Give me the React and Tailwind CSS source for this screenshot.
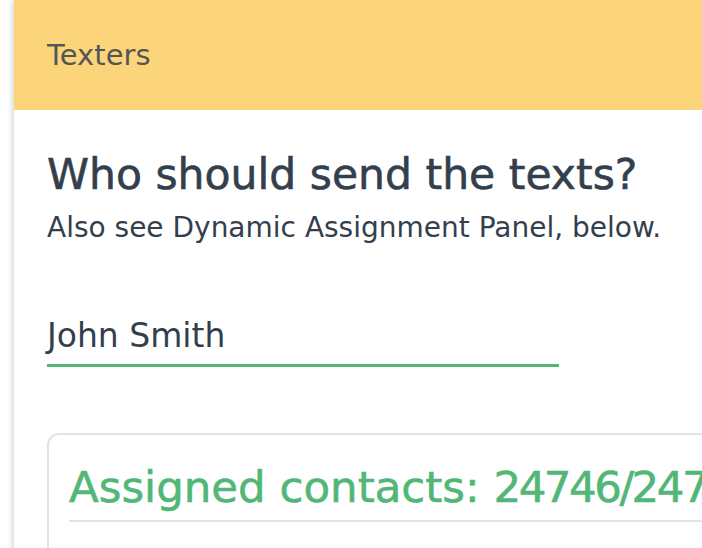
export default function App() {
  return (
    <div className="h-[548px] w-[702px] overflow-hidden bg-white pl-[14px]" style={{ fontFamily: '"DejaVu Sans", sans-serif' }}>
      <div className="min-h-[548px] w-[820px] bg-white shadow-[-3px_0_4px_rgba(0,0,0,0.12)]">
        <div className="flex h-[110px] items-center bg-[#fcd57b] px-[33px]">
          <span className="text-[29px] leading-none text-[#555555]">Texters</span>
        </div>
        <div className="px-[33px] pt-[40px]">
          <h2 className="whitespace-nowrap text-[42.5px] font-normal leading-[50px] text-[#333f4d] [-webkit-text-stroke:0.6px_#333f4d]">
            Who should send the texts?
          </h2>
          <p className="mt-[12px] whitespace-nowrap text-[28px] leading-[32px] text-[#333f4d]">
            Also see Dynamic Assignment Panel, below.
          </p>
          <div className="mt-[72px] w-[512px] border-b-[3px] border-[#52b677] pb-[8px]">
            <span className="block text-[33px] leading-[40px] text-[#333f4d]">John Smith</span>
          </div>
          <div className="mt-[66px] rounded-tl-[12px] border-l-2 border-t-2 border-[#e3e3e3] pl-[20px] pt-[26px]">
            <div className="border-b-2 border-[#e3e3e3] pb-[7px]">
              <h3 className="whitespace-nowrap text-[43.5px] font-normal leading-[52px] text-[#52b677] [-webkit-text-stroke:0.6px_#52b677]">
                Assigned contacts: <span className="tracking-[-2.5px]">24746/24746</span>
              </h3>
            </div>
            <div className="h-[40px]" />
          </div>
        </div>
      </div>
    </div>
  );
}
